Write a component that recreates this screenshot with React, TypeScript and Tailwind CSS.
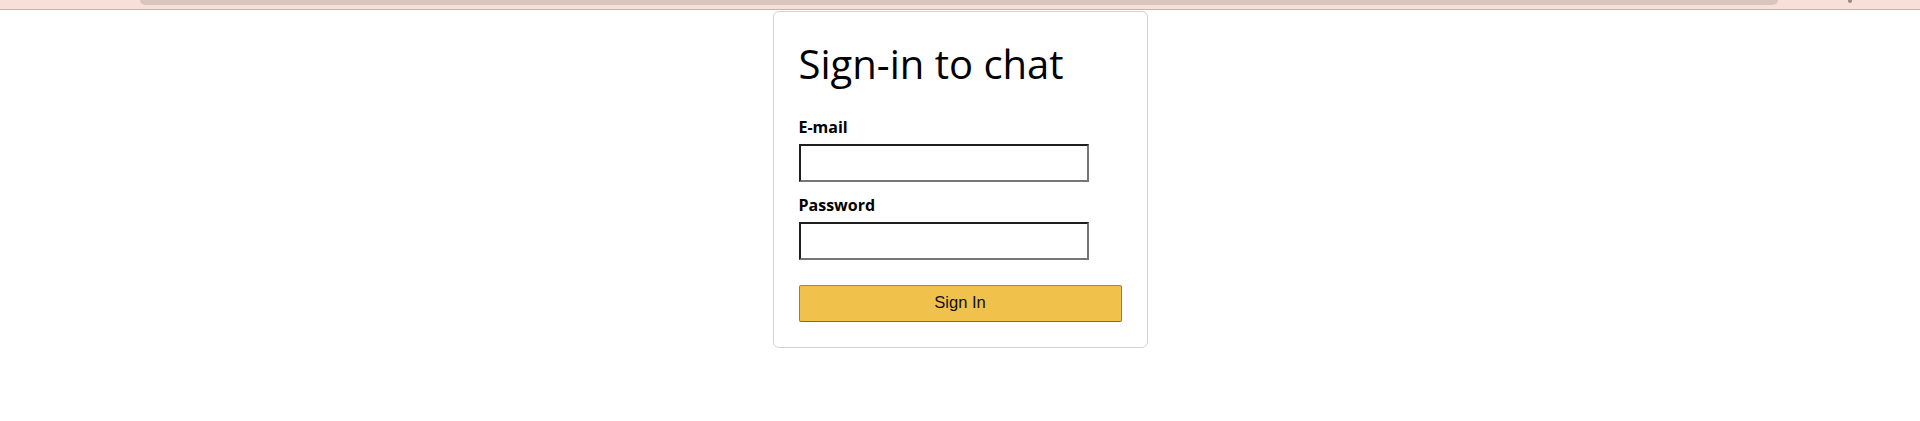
export default function App() {
  return (
    <div className="min-h-[421px] bg-white font-['Open_Sans','Noto_Sans',sans-serif] text-black">
      {/* browser chrome strip */}
      <div className="h-[10px] bg-[#f6e0d8] border-b border-[#c9b2aa] relative">
        <div className="absolute left-[140px] right-[142px] top-0 h-[5px] bg-[#d9c5bd] rounded-b-[6px]" />
        <div className="absolute left-[1848px] top-0 w-[4px] h-[3px] bg-[#9a8c86] rounded-b-full" />
      </div>

      <div className="flex justify-center mt-px">
        <div className="w-[375px] flex flex-col border border-[#d3d3d3] rounded-[6px] p-[25px]">
          <h1 className="text-[40px] leading-[54px] font-medium mb-[25px]">Sign-in to chat</h1>
          <form className="flex flex-col" onSubmit={(e) => e.preventDefault()}>
            <label className="text-[16px] leading-[22px] font-bold mb-[6px]">E-mail</label>
            <input
              type="text"
              className="w-[290px] h-[37.5px] mb-[12.5px] bg-white border-2 border-t-[#1e1e1e] border-l-[#1e1e1e] border-b-[#767676] border-r-[#767676] outline-none"
            />
            <label className="text-[16px] leading-[22px] font-bold mb-[6px]">Password</label>
            <input
              type="password"
              className="w-[290px] h-[37.5px] mb-[12.5px] bg-white border-2 border-t-[#1e1e1e] border-l-[#1e1e1e] border-b-[#767676] border-r-[#767676] outline-none"
            />
            <button
              type="submit"
              className="w-full h-[37.5px] mt-[12.5px] bg-[#f0c14b] border border-t-[#a88734] border-l-[#9c7e31] border-r-[#9c7e31] border-b-[#846a29] rounded-[2px] font-['Liberation_Sans',Arial,sans-serif] text-[16.6px] text-[#111]"
            >
              Sign In
            </button>
          </form>
        </div>
      </div>
    </div>
  )
}
